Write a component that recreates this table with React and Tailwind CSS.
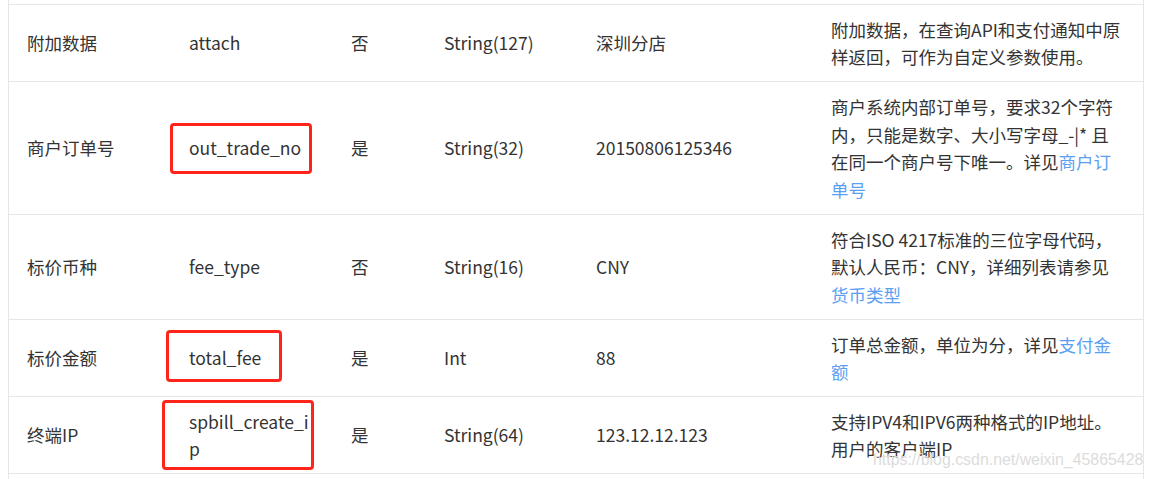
import React from 'react';

const Link = ({ children }) => <span className="text-[#5b9ff3]">{children}</span>;

const rows = [
  {
    name: '附加数据',
    field: 'attach',
    required: '否',
    type: 'String(127)',
    sample: '深圳分店',
    desc: [['附加数据，在查询API和支付通知中原'], ['样返回，可作为自定义参数使用。']],
    h: 'h-[77px]',
  },
  {
    name: '商户订单号',
    field: 'out_trade_no',
    required: '是',
    type: 'String(32)',
    sample: '20150806125346',
    desc: [
      ['商户系统内部订单号，要求32个字符'],
      ['内，只能是数字、大小写字母_-|* 且'],
      ['在同一个商户号下唯一。详见', '商户订'],
      [null, '单号'],
    ],
    mark: 'left-0 top-[41px] w-[142px] h-[51px]',
    h: 'h-[133px]',
  },
  {
    name: '标价币种',
    field: 'fee_type',
    required: '否',
    type: 'String(16)',
    sample: 'CNY',
    desc: [
      ['符合ISO 4217标准的三位字母代码，'],
      ['默认人民币：CNY，详细列表请参见'],
      [null, '货币类型'],
    ],
    h: 'h-[105px]',
  },
  {
    name: '标价金额',
    field: 'total_fee',
    required: '是',
    type: 'Int',
    sample: '88',
    desc: [['订单总金额，单位为分，详见', '支付金'], [null, '额']],
    mark: 'left-[-4px] top-[10px] w-[116px] h-[52px]',
    h: 'h-[77px]',
  },
  {
    name: '终端IP',
    field: 'spbill_create_ip',
    required: '是',
    type: 'String(64)',
    sample: '123.12.12.123',
    desc: [['支持IPV4和IPV6两种格式的IP地址。'], ['用户的客户端IP']],
    mark: 'left-[-8px] top-[3px] w-[152px] h-[70px]',
    h: 'h-[77px]',
  },
];

export default function App() {
  return (
    <div
      className="relative w-[1153px] h-[479px] overflow-hidden bg-white text-[#333] text-[17.5px] leading-[27.5px]"
      style={{ fontFamily: '"Noto Sans CJK SC", "Noto Sans", sans-serif' }}
    >
      <div className="ml-[8px] w-[1136px] border-x border-[#e6e6e6]">
        <div className="h-[4px]" />
        {rows.map((r, i) => (
          <div
            key={i}
            className={`grid grid-cols-[161px_162px_93px_152px_235px_331px] items-center border-t border-[#e6e6e6] ${r.h}`}
          >
            <div className="pl-[18px]">{r.name}</div>
            <div className="relative px-[19px] self-stretch flex items-center">
              <span className="w-[124px] break-all">{r.field}</span>
              {r.mark && (
                <div className={`absolute rounded-[4px] border-[3px] border-[#ff2419] ${r.mark}`} />
              )}
            </div>
            <div className="px-[19px]">{r.required}</div>
            <div className="px-[19px]">{r.type}</div>
            <div className="px-[19px]">{r.sample}</div>
            <div className="px-[19px] whitespace-nowrap">
              {r.desc.map((line, j) => (
                <div key={j}>
                  {line[0]}
                  {line[1] && <Link>{line[1]}</Link>}
                </div>
              ))}
            </div>
          </div>
        ))}
        <div className="h-[10px] border-t border-[#e6e6e6]" />
      </div>
      <div
        className="absolute left-[873px] top-[449px] text-[15.9px] leading-[22px] text-[#dcdcdc] whitespace-nowrap"
        style={{ fontFamily: '"Liberation Sans", sans-serif' }}
      >
        https://blog.csdn.net/weixin_45865428
      </div>
    </div>
  );
}
